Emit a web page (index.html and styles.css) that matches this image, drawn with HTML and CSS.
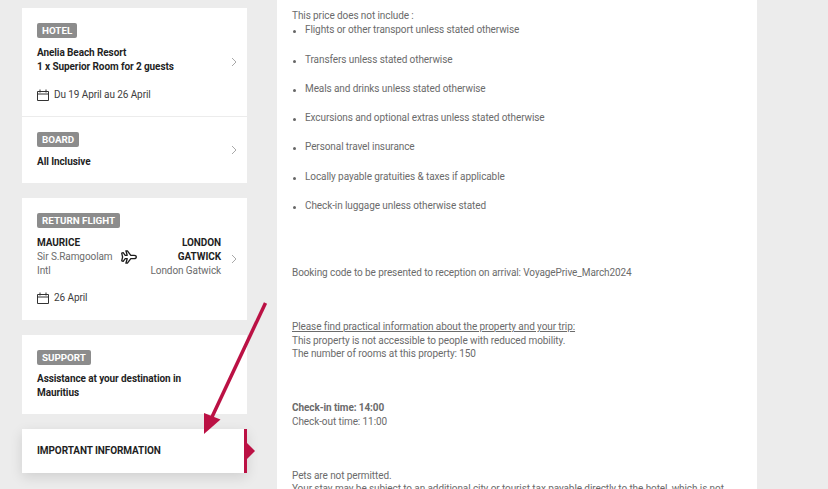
FILE: index.html
```html
<!DOCTYPE html>
<html lang="en">
<head>
    <meta charset="UTF-8">
    <meta name="viewport" content="width=device-width, initial-scale=1.0">
    <title>Important information</title>
    <link rel="stylesheet" href="styles.css">
</head>
<body>
    <div class="page">
        <div class="sidebar">
            <div class="card">
                <div class="section section-hotel">
                    <span class="tag">HOTEL</span>
                    <div class="section-row">
                        <div class="section-text">
                            <p class="title">Anelia Beach Resort<br>1 x Superior Room for 2 guests</p>
                        </div>
                        <svg class="chevron chevron-hotel" width="6" height="10" viewBox="0 0 6 10"><path d="M1 1l4 4-4 4" fill="none" stroke="#a9a9a9" stroke-width="1"/></svg>
                    </div>
                    <div class="date">
                        <svg class="cal" width="12" height="12" viewBox="0 0 12 12"><path d="M.5 2.500h11v9H.5zM.5 5h11M3 .5v3M9 .5v3" fill="none" stroke="#333" stroke-width="1"/></svg>
                        <span>Du 19 April au 26 April</span>
                    </div>
                </div>
                <div class="section section-board">
                    <span class="tag">BOARD</span>
                    <div class="section-row">
                        <p class="title">All Inclusive</p>
                        <svg class="chevron chevron-board" width="6" height="10" viewBox="0 0 6 10"><path d="M1 1l4 4-4 4" fill="none" stroke="#a9a9a9" stroke-width="1"/></svg>
                    </div>
                </div>
            </div>

            <div class="card section section-flight">
                <span class="tag">RETURN FLIGHT</span>
                <div class="flight">
                    <div class="airport">
                        <strong>MAURICE</strong>
                        <span>Sir S.Ramgoolam Intl</span>
                    </div>
                    <svg class="plane" width="16" height="14" viewBox="0 0 16 14"><path d="M.7 3.200l1.500-.5 2 2.600h2L4.900.8h1.500l3.400 4.500h3.200c1.400 0 2.300.8 2.300 1.700s-.9 1.700-2.300 1.700H9.800l-3.400 4.500H4.900l1.300-4.500h-2l-2 2.600-1.500-.5.900-3.800z" fill="none" stroke="#1c1c1c" stroke-width="1.300" stroke-linejoin="round"/></svg>
                    <div class="airport airport-to">
                        <strong>LONDON GATWICK</strong>
                        <span>London Gatwick</span>
                    </div>
                    <svg class="chevron" width="6" height="10" viewBox="0 0 6 10"><path d="M1 1l4 4-4 4" fill="none" stroke="#a9a9a9" stroke-width="1"/></svg>
                </div>
                <div class="date date-flight">
                    <svg class="cal" width="12" height="12" viewBox="0 0 12 12"><path d="M.5 2.500h11v9H.5zM.5 5h11M3 .5v3M9 .5v3" fill="none" stroke="#333" stroke-width="1"/></svg>
                    <span>26 April</span>
                </div>
            </div>

            <div class="card section section-support">
                <span class="tag">SUPPORT</span>
                <p class="title title-support">Assistance at your destination in Mauritius</p>
            </div>

            <div class="card card-active">IMPORTANT INFORMATION</div>
        </div>

        <div class="content">
            <p>This price does not include :</p>
            <ul>
                <li>Flights or other transport unless stated otherwise</li>
                <li>Transfers unless stated otherwise</li>
                <li>Meals and drinks unless stated otherwise</li>
                <li>Excursions and optional extras unless stated otherwise</li>
                <li>Personal travel insurance</li>
                <li>Locally payable gratuities &amp; taxes if applicable</li>
                <li>Check-in luggage unless otherwise stated</li>
            </ul>
            <p class="booking">Booking code to be presented to reception on arrival: VoyagePrive_March2024</p>
            <p class="practical"><u>Please find practical information about the property and your trip:</u><br>
            This property is not accessible to people with reduced mobility.<br>
            The number of rooms at this property: 150</p>
            <p class="times"><strong>Check-in time: 14:00</strong><br>Check-out time: 11:00</p>
            <p class="pets">Pets are not permitted.<br>Your stay may be subject to an additional city or tourist tax payable directly to the hotel, which is not</p>
        </div>
    </div>

    <!-- red arrow drawn over the screenshot -->
    <svg class="arrow" width="828" height="489" viewBox="0 0 828 489">
        <path d="M265.500 303L212 417" fill="none" stroke="#bb1144" stroke-width="3.500"/>
        <path d="M204 413l16.500 6.500L204 434z" fill="#bb1144"/>
    </svg>
</body>
</html>
```

FILE: styles.css
```css
html, body {
    height: 100%;
    overflow: hidden;
}
body {
    font-family: Roboto, Arial, sans-serif;
    font-size: 10px;
    letter-spacing: -0.09px;
    line-height: 13.500px;
    margin: 0;
    padding: 0;
    background-color: #ececec;
    color: #6b6b6b;
}
p {
    margin: 0;
}
.page {
    display: flex;
    align-items: flex-start;
    gap: 30px;
    padding-left: 22px;
}
.sidebar {
    width: 225px;
    flex-shrink: 0;
    padding-top: 8px;
}
.card {
    background-color: #fff;
    margin-bottom: 15px;
}
.section {
    padding: 15px 15px 0;
}
.section-hotel {
    height: 109px;
    box-sizing: border-box;
    border-bottom: 1px solid #ececec;
}
.section-board {
    height: 66px;
    box-sizing: border-box;
}
.section-flight {
    height: 122px;
    box-sizing: border-box;
}
.section-support {
    height: 79px;
    box-sizing: border-box;
}
.tag {
    display: inline-block;
    height: 15px;
    line-height: 15px;
    padding: 0 5px;
    background-color: #8c8c8c;
    border-radius: 2px;
    color: #fff;
    font-size: 9.800px;
    font-weight: 700;
    letter-spacing: 0;
}
.section-row {
    display: flex;
    justify-content: space-between;
    align-items: center;
    margin-top: 8px;
}
.title {
    font-weight: 700;
    color: #1f1f1f;
}
.title-support {
    margin-top: 7px;
    width: 170px;
}
.chevron {
    margin-right: -5px;
    flex-shrink: 0;
}
.chevron-hotel {
    margin-top: 4px;
}
.chevron-board {
    margin-top: -24px;
}
.date {
    display: flex;
    align-items: center;
    gap: 5px;
    margin-top: 15px;
    color: #3d3d3d;
}
.date-flight {
    margin-top: 13px;
}
.flight {
    display: flex;
    align-items: center;
    margin-top: 8px;
    line-height: 14px;
}
.airport {
    display: flex;
    flex-direction: column;
    width: 80px;
    flex-shrink: 0;
}
.airport strong {
    color: #1f1f1f;
}
.airport-to {
    width: 72px;
    margin-left: 12px;
    text-align: right;
}
.plane {
    margin-left: 4px;
    flex-shrink: 0;
}
.flight .chevron {
    margin-left: 10px;
    margin-top: 4px;
}
.card-active {
    position: relative;
    height: 44px;
    box-sizing: border-box;
    padding-left: 15px;
    line-height: 43px;
    border-right: 3px solid #bb1144;
    box-shadow: 0 4px 12px rgba(0,0,0,0.12);
    color: #1f1f1f;
    font-weight: 700;
}
.card-active::after {
    content: "";
    position: absolute;
    top: 14px;
    right: -11px;
    border-left: 8px solid #bb1144;
    border-top: 8px solid transparent;
    border-bottom: 8px solid transparent;
}
.content {
    width: 480px;
    min-height: 489px;
    box-sizing: border-box;
    padding: 9px 15px 0;
    background-color: #fff;
}
ul {
    list-style: none;
    margin: 0.800px 0 0;
    padding: 0;
}
li {
    position: relative;
    padding-left: 13px;
    margin-bottom: 15.800px;
}
li::before {
    content: "";
    position: absolute;
    left: 1px;
    top: 7px;
    width: 3px;
    height: 3px;
    border-radius: 50%;
    background-color: #666;
}
.booking {
    margin-top: 53.600px;
}
.practical {
    margin-top: 40.500px;
}
.times {
    margin-top: 40.400px;
}
.pets {
    margin-top: 40.600px;
}
.arrow {
    position: absolute;
    top: 0;
    left: 0;
    pointer-events: none;
}
```
